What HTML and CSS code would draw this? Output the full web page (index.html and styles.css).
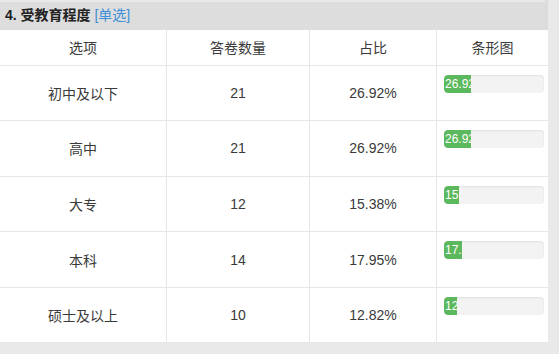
FILE: index.html
```html
<!DOCTYPE html>
<html lang="zh">
<head>
<meta charset="utf-8">
<link rel="stylesheet" href="styles.css">
</head>
<body>
<div class="panel">
  <div class="title"><b>4. 受教育程度</b> <span class="type">[单选]</span></div>
  <table class="stats">
    <thead>
      <tr><th class="c1">选项</th><th class="c2">答卷数量</th><th class="c3">占比</th><th class="c4">条形图</th></tr>
    </thead>
    <tbody>
      <tr><td>初中及以下</td><td>21</td><td>26.92%</td><td class="barcell"><div class="bar"><div class="fill" style="width:26.92%">26.92%</div></div></td></tr>
      <tr><td>高中</td><td>21</td><td>26.92%</td><td class="barcell"><div class="bar"><div class="fill" style="width:26.92%">26.92%</div></div></td></tr>
      <tr><td>大专</td><td>12</td><td>15.38%</td><td class="barcell"><div class="bar"><div class="fill" style="width:15.38%">15.38%</div></div></td></tr>
      <tr><td>本科</td><td>14</td><td>17.95%</td><td class="barcell"><div class="bar"><div class="fill" style="width:17.95%">17.95%</div></div></td></tr>
      <tr><td>硕士及以上</td><td>10</td><td>12.82%</td><td class="barcell"><div class="bar"><div class="fill" style="width:12.82%">12.82%</div></div></td></tr>
    </tbody>
  </table>
</div>
</body>
</html>
```
FILE: styles.css
```css
html, body {
  margin: 0;
  padding: 0;
}
body {
  background: #e9e9e9;
  font-family: "Liberation Sans", "Noto Sans CJK SC", sans-serif;
  color: #333;
  width: 559px;
  height: 354px;
  overflow: hidden;
}
.panel {
  width: 545px;
  border-right: 3px solid #dcdcdc;
}
.title {
  height: 30px;
  box-sizing: border-box;
  background: #dddddd;
  border-top: 2px solid #e9e9e9;
  padding: 3px 0 0 5px;
  font-size: 14px;
  line-height: 20px;
  color: #222;
}
.title b {
  font-weight: bold;
}
.type {
  color: #3f8fd8;
}
.stats {
  width: 545px;
  border-collapse: collapse;
  background: #fff;
  table-layout: fixed;
}
.stats th, .stats td {
  border: 1px solid #e6e6e6;
  text-align: center;
  vertical-align: middle;
  font-size: 14px;
  font-weight: normal;
  padding: 0;
  color: #3a3a3a;
}
.stats tr > :first-child { border-left: none; }
.stats tr > :last-child { border-right: none; }
.stats thead tr { height: 35px; }
.stats thead th { border-top: none; }
.stats tbody tr { height: 55.6px; }
.c1 { width: 166px; }
.c2 { width: 142px; }
.c3 { width: 126px; }
.c4 { width: 111px; }
.stats td.barcell {
  vertical-align: top;
  text-align: left;
  padding: 9px 0 0 7px;
}
.bar {
  width: 100px;
  height: 18px;
  background: #f3f3f3;
  border-radius: 4px;
  overflow: hidden;
  box-shadow: inset 0 1px 2px rgba(0,0,0,0.08);
}
.fill {
  height: 100%;
  background: #5cb85c;
  color: #fff;
  font-size: 12px;
  line-height: 18px;
  white-space: nowrap;
  overflow: hidden;
  border-radius: 4px 0 0 4px;
  padding-left: 1px;
  box-sizing: border-box;
}
```
